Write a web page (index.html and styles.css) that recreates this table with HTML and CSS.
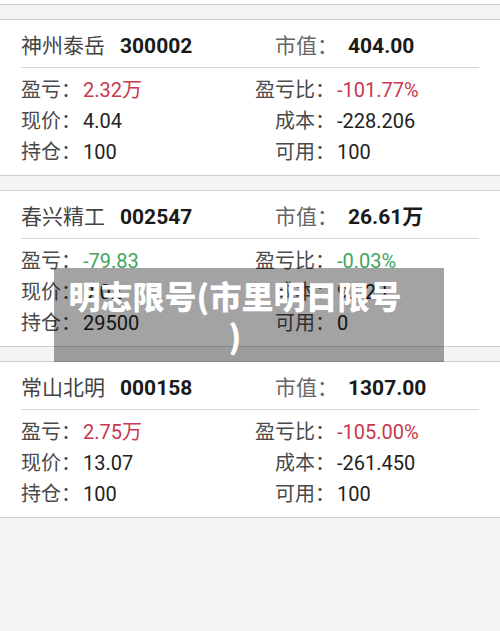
FILE: index.html
```html
<!DOCTYPE html>
<html lang="zh-CN">
<head>
    <meta charset="UTF-8">
    <meta name="viewport" content="width=device-width, initial-scale=1.0">
    <title>持仓</title>
    <link rel="stylesheet" href="styles.css">
</head>
<body>

    <div class="stub"></div>

    <div class="card">
        <div class="card-head">
            <div class="name"><span>神州泰岳</span><b>300002</b></div>
            <div class="mv"><span>市值：</span><b>404.00</b></div>
        </div>
        <div class="card-body">
            <div class="row">
                <span class="lbl">盈亏：</span><span class="val red">2.32万</span>
                <span class="lbl r">盈亏比：</span><span class="val red">-101.77%</span>
            </div>
            <div class="row">
                <span class="lbl">现价：</span><span class="val">4.04</span>
                <span class="lbl r">成本：</span><span class="val">-228.206</span>
            </div>
            <div class="row">
                <span class="lbl">持仓：</span><span class="val">100</span>
                <span class="lbl r">可用：</span><span class="val">100</span>
            </div>
        </div>
    </div>

    <div class="card">
        <div class="card-head">
            <div class="name"><span>春兴精工</span><b>002547</b></div>
            <div class="mv"><span>市值：</span><b>26.61万</b></div>
        </div>
        <div class="card-body">
            <div class="row">
                <span class="lbl">盈亏：</span><span class="val green">-79.83</span>
                <span class="lbl r">盈亏比：</span><span class="val green">-0.03%</span>
            </div>
            <div class="row">
                <span class="lbl">现价：</span><span class="val">9.02</span>
                <span class="lbl r">成本：</span><span class="val">9.023</span>
            </div>
            <div class="row">
                <span class="lbl">持仓：</span><span class="val">29500</span>
                <span class="lbl r">可用：</span><span class="val">0</span>
            </div>
        </div>
    </div>

    <div class="card">
        <div class="card-head">
            <div class="name"><span>常山北明</span><b>000158</b></div>
            <div class="mv"><span>市值：</span><b>1307.00</b></div>
        </div>
        <div class="card-body">
            <div class="row">
                <span class="lbl">盈亏：</span><span class="val red">2.75万</span>
                <span class="lbl r">盈亏比：</span><span class="val red">-105.00%</span>
            </div>
            <div class="row">
                <span class="lbl">现价：</span><span class="val">13.07</span>
                <span class="lbl r">成本：</span><span class="val">-261.450</span>
            </div>
            <div class="row">
                <span class="lbl">持仓：</span><span class="val">100</span>
                <span class="lbl r">可用：</span><span class="val">100</span>
            </div>
        </div>
    </div>

    <!-- 提示框 -->
    <div class="toast">明志限号(市里明日限号<br>)</div>

</body>
</html>
```

FILE: styles.css
```css
body {
    margin: 0;
    padding: 0;
    font-family: Roboto, "Noto Sans CJK SC", sans-serif;
    background-color: #f4f4f4;
    min-height: 100vh;
    color: #222;
    position: relative;
}
.stub {
    height: 4px;
    background-color: #fff;
    border-bottom: 1px solid #cfcfcf;
}
.card {
    margin-top: 14px;
    background-color: #fff;
    border-top: 1px solid #cfcfcf;
    border-bottom: 1px solid #cfcfcf;
}
.card-head {
    height: 47px;
    margin: 0 21px;
    border-bottom: 1px solid #d6d6d6;
    display: flex;
    align-items: center;
    font-size: 21px;
}
.card-head .name {
    width: 254px;
    color: #444;
}
.card-head .name b {
    margin-left: 15px;
    color: #1a1a1a;
}
.card-head .mv span {
    color: #666;
}
.card-head .mv b {
    margin-left: 10px;
    color: #1a1a1a;
}
.card-body {
    padding: 7px 0;
}
.row {
    display: grid;
    grid-template-columns: 60px 173px 81px 1fr;
    padding-left: 21px;
    height: 31px;
    line-height: 31px;
    font-size: 20px;
}
.lbl {
    color: #4a4a4a;
}
.lbl.r {
    text-align: right;
}
.val {
    padding-left: 2px;
    color: #222;
}
.red {
    color: #c9384e;
}
.green {
    color: #3fa65e;
}
.toast {
    position: absolute;
    left: 54px;
    top: 268px;
    width: 390px;
    height: 94px;
    box-sizing: border-box;
    padding: 7px 34px 7px 6px;
    background-color: rgba(0, 0, 0, 0.36);
    color: #fff;
    font-family: "Noto Sans CJK SC", sans-serif;
    font-weight: 900;
    font-size: 32px;
    line-height: 40px;
    text-align: center;
}
```
